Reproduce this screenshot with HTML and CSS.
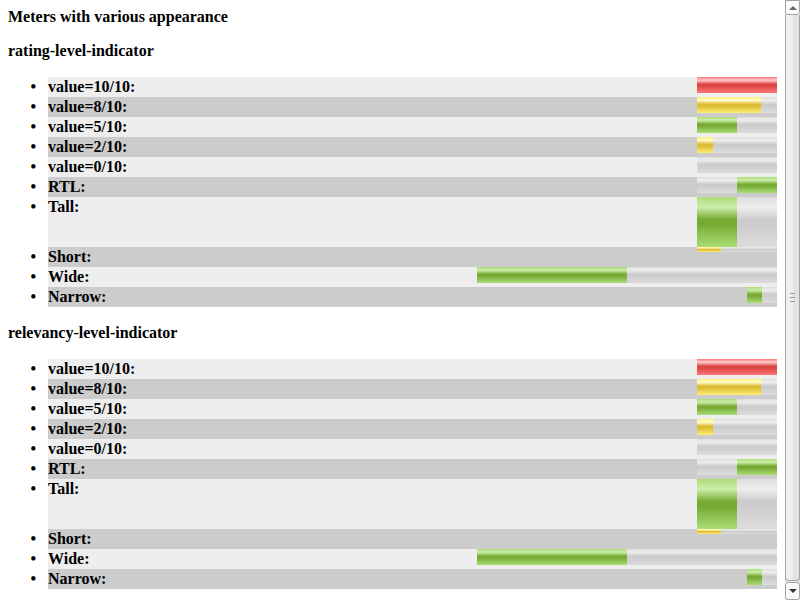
FILE: index.html
```html
<!DOCTYPE html>
<html>
<head>
<meta charset="utf-8">
<link rel="stylesheet" href="styles.css">
</head>
<body>
<div class="frame">
  <div class="page">
    <p class="title">Meters with various appearance</p>
    <p class="section">rating-level-indicator</p>
    <ul class="list">
      <li><div class="row"><span>value=10/10:</span><div class="meter"><div class="fill bad" style="width:100%"></div></div></div></li>
      <li><div class="row"><span>value=8/10:</span><div class="meter"><div class="fill sub" style="width:80%"></div></div></div></li>
      <li><div class="row"><span>value=5/10:</span><div class="meter"><div class="fill opt" style="width:50%"></div></div></div></li>
      <li><div class="row"><span>value=2/10:</span><div class="meter"><div class="fill sub" style="width:20%"></div></div></div></li>
      <li><div class="row"><span>value=0/10:</span><div class="meter"><div class="fill opt" style="width:0%"></div></div></div></li>
      <li><div class="row"><span>RTL:</span><div class="meter rtl"><div class="fill opt" style="width:50%"></div></div></div></li>
      <li><div class="row"><span>Tall:</span><div class="meter tall"><div class="fill opt" style="width:50%"></div></div></div></li>
      <li><div class="row"><span>Short:</span><div class="meter short"><div class="fill sub" style="width:30%"></div></div></div></li>
      <li><div class="row"><span>Wide:</span><div class="meter wide"><div class="fill opt" style="width:50%"></div></div></div></li>
      <li><div class="row"><span>Narrow:</span><div class="meter narrow"><div class="fill opt" style="width:50%"></div></div></div></li>
    </ul>
    <p class="section second">relevancy-level-indicator</p>
    <ul class="list">
      <li><div class="row"><span>value=10/10:</span><div class="meter"><div class="fill bad" style="width:100%"></div></div></div></li>
      <li><div class="row"><span>value=8/10:</span><div class="meter"><div class="fill sub" style="width:80%"></div></div></div></li>
      <li><div class="row"><span>value=5/10:</span><div class="meter"><div class="fill opt" style="width:50%"></div></div></div></li>
      <li><div class="row"><span>value=2/10:</span><div class="meter"><div class="fill sub" style="width:20%"></div></div></div></li>
      <li><div class="row"><span>value=0/10:</span><div class="meter"><div class="fill opt" style="width:0%"></div></div></div></li>
      <li><div class="row"><span>RTL:</span><div class="meter rtl"><div class="fill opt" style="width:50%"></div></div></div></li>
      <li><div class="row"><span>Tall:</span><div class="meter tall"><div class="fill opt" style="width:50%"></div></div></div></li>
      <li><div class="row"><span>Short:</span><div class="meter short"><div class="fill sub" style="width:30%"></div></div></div></li>
      <li><div class="row"><span>Wide:</span><div class="meter wide"><div class="fill opt" style="width:50%"></div></div></div></li>
      <li><div class="row"><span>Narrow:</span><div class="meter narrow"><div class="fill opt" style="width:50%"></div></div></div></li>
    </ul>
  </div>
  <div class="scrollbar">
    <div class="sb-btn sb-up"><span class="tri-up"></span></div>
    <div class="sb-thumb"><span class="grip"></span><span class="grip"></span><span class="grip"></span></div>
    <div class="sb-btn sb-down"><span class="tri-down"></span></div>
  </div>
</div>
</body>
</html>
```
FILE: styles.css
```css
html, body {
  margin: 0;
  padding: 0;
  width: 800px;
  height: 600px;
  overflow: hidden;
  background: #fff;
}
.frame {
  display: flex;
  width: 800px;
  height: 600px;
}
.page {
  flex: 1;
  overflow: hidden;
  padding: 8px;
  font-family: "Liberation Serif", "Times New Roman", serif;
  font-weight: bold;
  font-size: 16px;
  color: #000;
}
.title {
  margin: 0 0 16px 0;
  line-height: 18px;
}
.section {
  margin: 16px 0 17px 0;
  line-height: 18px;
}
.section.second {
  margin-top: 17px;
}
.list {
  margin: 0 0 16px 0;
  padding-left: 40px;
}
.list li {
  line-height: 20px;
}
.list li::marker {
  content: "\2022\00a0\00a0\00a0";
  font-size: 16px;
}
.list li:nth-child(odd) { background: #eee; }
.list li:nth-child(even) { background: #ccc; }
.row {
  display: flex;
  justify-content: space-between;
  align-items: flex-start;
  line-height: 20px;
  min-height: 20px;
}
.meter {
  width: 80px;
  height: 16px;
  display: flex;
  background: linear-gradient(to bottom, #ddd 0%, #eee 20%, #ccc 45%, #ccc 55%, #ddd 100%);
}
.meter.rtl { justify-content: flex-end; }
.meter.tall { height: 50px; }
.meter.short { height: 5px; }
.meter.wide { width: 300px; }
.meter.narrow { width: 30px; }
.fill { height: 100%; }
.fill.opt { background: linear-gradient(to bottom, #ad7 0%, #cea 20%, #7a3 45%, #7a3 55%, #ad7 100%); }
.fill.sub { background: linear-gradient(to bottom, #fe7 0%, #ffc 20%, #db3 45%, #db3 55%, #fe7 100%); }
.fill.bad { background: linear-gradient(to bottom, #f77 0%, #fcc 20%, #d44 45%, #d44 55%, #f77 100%); }

.scrollbar {
  width: 15px;
  display: flex;
  flex-direction: column;
  background: #eaeaea;
  box-sizing: border-box;
}
.sb-btn {
  height: 15px;
  box-sizing: border-box;
  border: 1px solid #a3a3a3;
  background: #fafafa;
  display: flex;
  align-items: center;
  justify-content: center;
}
.sb-up { border-radius: 0 0 3px 3px; }
.sb-down { border-radius: 3px 3px 3px 3px; height: 18px; }
.tri-up {
  width: 0; height: 0;
  border-left: 4px solid transparent;
  border-right: 4px solid transparent;
  border-bottom: 4px solid #666;
}
.tri-down {
  width: 0; height: 0;
  border-left: 4px solid transparent;
  border-right: 4px solid transparent;
  border-top: 4px solid #333;
}
.sb-thumb {
  flex: 1;
  box-sizing: border-box;
  border: 1px solid #a3a3a3;
  border-top: none;
  border-radius: 0 0 3px 3px;
  margin-bottom: 1px;
  background: linear-gradient(to right, #efefef 0%, #efefef 50%, #e3e3e3 50%, #e3e3e3 100%);
  display: flex;
  flex-direction: column;
  align-items: center;
  justify-content: center;
  gap: 3px;
}
.grip {
  width: 5px;
  height: 1px;
  background: #999;
  display: block;
}
```
